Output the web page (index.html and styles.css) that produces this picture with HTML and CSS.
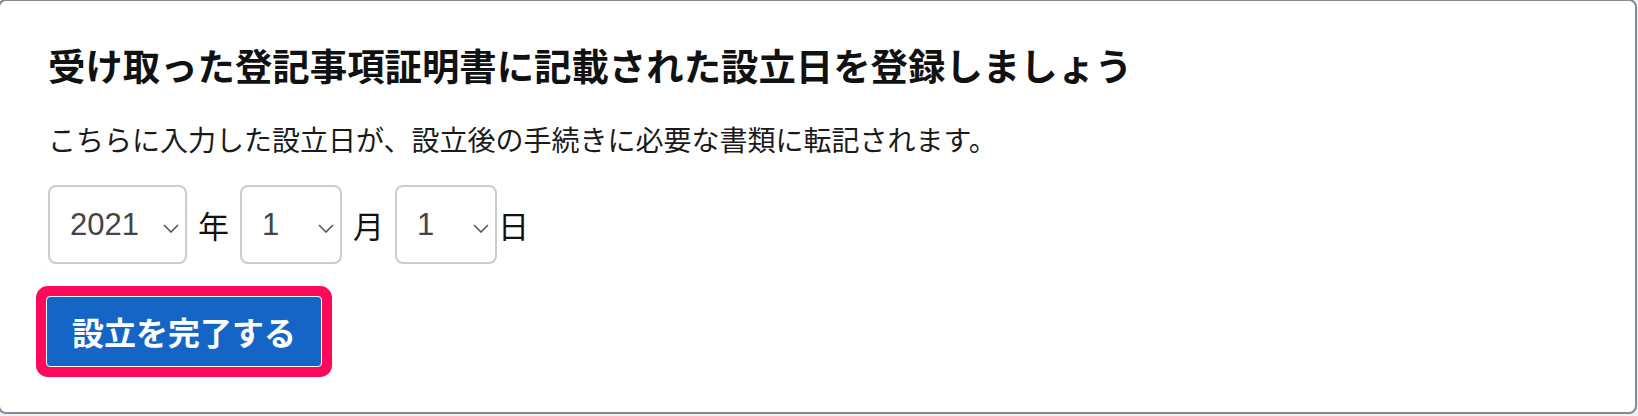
FILE: index.html
```html
<!DOCTYPE html>
<html lang="ja">
<head>
<meta charset="utf-8">
<title>設立日の登録</title>
<link rel="stylesheet" href="styles.css">
</head>
<body>
<section class="card">
  <h1 class="title">受け取った登記事項証明書に記載された設立日を登録しましょう</h1>
  <p class="lead">こちらに入力した設立日が、設立後の手続きに必要な書類に転記されます。</p>
  <div class="date-row">
    <div class="select-wrap select-year">
      <select class="select"><option>2021</option></select>
      <svg class="chevron" width="16" height="9" viewBox="0 0 16 9"><path d="M1 1 L8 8 L15 1" fill="none" stroke="#555" stroke-width="1.6"/></svg>
    </div>
    <span class="unit">年</span>
    <div class="select-wrap select-small">
      <select class="select"><option>1</option></select>
      <svg class="chevron" width="16" height="9" viewBox="0 0 16 9"><path d="M1 1 L8 8 L15 1" fill="none" stroke="#555" stroke-width="1.6"/></svg>
    </div>
    <span class="unit">月</span>
    <div class="select-wrap select-small">
      <select class="select"><option>1</option></select>
      <svg class="chevron" width="16" height="9" viewBox="0 0 16 9"><path d="M1 1 L8 8 L15 1" fill="none" stroke="#555" stroke-width="1.6"/></svg>
    </div>
    <span class="unit unit-last">日</span>
  </div>
  <button class="submit" type="button">設立を完了する</button>
</section>
</body>
</html>
```

FILE: styles.css
```css
html, body {
  margin: 0;
  padding: 0;
}
body {
  background: #e9f1fa;
  font-family: "Noto Sans CJK JP", "Noto Sans", sans-serif;
  color: #111;
  width: 1638px;
  height: 416px;
  overflow: hidden;
}
.card {
  box-sizing: border-box;
  margin: -1px 0 0 -2px;
  width: 1639px;
  height: 415px;
  background: #fff;
  border: 2px solid #8a8a8a;
  border-radius: 8px;
  padding: 38px 48px 0 48px;
}
.title {
  margin: 0;
  font-size: 37.4px;
  font-weight: 700;
  line-height: 52px;
  color: #111;
}
.lead {
  margin: 28px 0 0 0;
  font-size: 28px;
  line-height: 40px;
  color: #1a1a1a;
}
.date-row {
  display: flex;
  align-items: center;
  margin-top: 26px;
  height: 79px;
}
.select-wrap {
  position: relative;
  height: 79px;
}
.select-year { width: 139px; }
.select-small { width: 102px; }
.select {
  -webkit-appearance: none;
  appearance: none;
  box-sizing: border-box;
  width: 100%;
  height: 79px;
  margin: 0;
  border: 2px solid #cccccc;
  border-radius: 8px;
  background: #fff;
  padding: 0 0 0 20px;
  font-family: "Liberation Sans", Arial, sans-serif;
  font-size: 31px;
  color: #444;
  outline: none;
}
.chevron {
  position: absolute;
  right: 8px;
  top: 39px;
  pointer-events: none;
}
.unit {
  font-size: 31px;
  line-height: 40px;
  margin: 0 11px;
  color: #111;
}
.unit-last {
  margin: 0 0 0 1px;
}
.submit {
  display: block;
  box-sizing: border-box;
  margin: 32px 0 0 -2px;
  width: 276px;
  height: 71px;
  padding: 0;
  border: 1px solid #fff;
  border-radius: 4px;
  background: #1565c6;
  color: #fff;
  font-family: "Noto Sans CJK JP", "Noto Sans", sans-serif;
  font-size: 32px;
  font-weight: 700;
  line-height: 69px;
  box-shadow: 0 0 0 10px #ff0a5a;
  cursor: pointer;
}
```
